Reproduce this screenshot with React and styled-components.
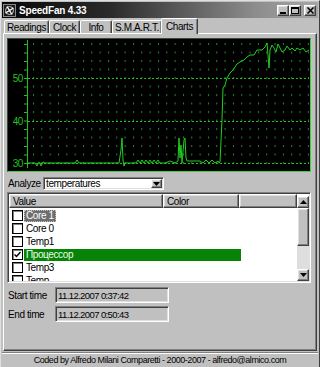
import React from "react";
import styled, { createGlobalStyle, css } from "styled-components";

const GlobalStyle = createGlobalStyle`
  html, body { margin: 0; padding: 0; background: #c0c0c0; }
  body { font-family: "Liberation Sans", Arial, sans-serif; }
  * { box-sizing: border-box; }
`;

const raised = css`
  border: 1px solid;
  border-color: #ffffff #404040 #404040 #ffffff;
  box-shadow: inset -1px -1px #808080, inset 1px 1px #dfdfdf;
`;

const sunken = css`
  border: 1px solid;
  border-color: #808080 #ffffff #ffffff #808080;
  box-shadow: inset 1px 1px #404040, inset -1px -1px #dfdfdf;
`;

const tabs = [
  { label: "Readings", width: 45 },
  { label: "Clock", width: 31 },
  { label: "Info", width: 32 },
  { label: "S.M.A.R.T.", width: 50 },
  { label: "Charts", width: 37, active: true },
];

const sensors = [
  { name: "Core 1", focus: true },
  { name: "Core 0" },
  { name: "Temp1" },
  { name: "Процессор", checked: true, color: true },
  { name: "Temp3" },
  { name: "Temp" },
];

// chart data in window coordinates
const series = [
  [27, 163], [35, 163], [37, 166], [39, 162], [41, 166], [43, 162], [45, 163],
  [75, 163], [77, 160], [79, 163], [119, 163], [121, 150], [122, 138], [123, 160],
  [124, 166], [125, 163], [136, 163], [138, 160], [140, 163], [142, 160], [144, 163],
  [146, 160], [148, 163], [150, 160], [152, 163], [154, 160], [156, 163], [158, 160],
  [160, 163], [165, 163], [170, 161], [175, 163], [178, 161], [179, 138], [180, 158],
  [181, 145], [182, 163], [184, 140], [185, 138], [186, 158], [187, 161], [200, 161],
  [203, 163], [206, 160], [209, 163], [212, 160], [215, 163], [218, 161], [219, 163],
  [220, 162], [222, 120], [223, 88], [225, 85], [227, 78], [230, 73], [233, 70],
  [237, 64], [240, 62], [244, 60], [247, 57], [250, 55], [254, 55], [257, 50],
  [262, 50], [265, 47], [267, 43], [268, 55], [269, 68], [270, 50], [272, 45],
  [274, 48], [276, 52], [278, 44], [280, 48], [282, 52], [285, 50], [287, 46],
  [290, 50], [292, 48], [295, 51], [297, 48], [300, 50], [303, 48], [306, 52], [309, 50],
];

const rows = Array.from({ length: 15 }, (_, k) => 125 - 8.5 * k);

const Chart = () => (
  <ChartFrame>
    <svg width="304" height="134" viewBox="0 0 304 134">
      <defs>
        <pattern id="dots" x="26" y="5" width="8.33" height="8.5" patternUnits="userSpaceOnUse">
          <rect x="0" y="0" width="1" height="2" fill="#2c8a2c" />
        </pattern>
      </defs>
      <rect x="21" y="2" width="281" height="128" fill="url(#dots)" />
      <line x1="20.5" y1="2" x2="20.5" y2="130" stroke="#22c022" />
      {rows.map((y) => (
        <line key={y} x1="17" y1={y + 0.5} x2="20" y2={y + 0.5} stroke="#22c022" />
      ))}
      {[40.5, 83.5, 125.5].map((y) => (
        <line key={y} x1="21" y1={y} x2="302" y2={y} stroke="#22c022" strokeDasharray="2 2" />
      ))}
      {[["50", 44], ["40", 87], ["30", 129]].map(([t, y]) => (
        <text key={t} x="16" y={y} fill="#22c022" fontSize="10" textAnchor="end"
          fontFamily="Liberation Sans, Arial, sans-serif">{t}</text>
      ))}
      <g transform="translate(-7 -38)">
        <polyline points={series.map((p) => p.join(",")).join(" ")}
          fill="none" stroke="#22d022" strokeWidth="1" />
      </g>
    </svg>
  </ChartFrame>
);

const FanIcon = () => (
  <svg width="13" height="13" viewBox="0 0 13 13">
    <rect x="0.5" y="0.5" width="12" height="12" fill="#1a1a1a" stroke="#8a8a8a" />
    <circle cx="6.5" cy="6.5" r="4" fill="none" stroke="#cfcfcf" />
    <path d="M6.5 6.5 L4 2.5 M6.5 6.5 L10.5 4 M6.5 6.5 L9 10.5 M6.5 6.5 L2.5 9" stroke="#ffffff" strokeWidth="1.4" />
  </svg>
);

const App = () => (
  <>
    <GlobalStyle />
    <Window>
      <TitleBar>
        <FanIcon />
        <Title>SpeedFan 4.33</Title>
        <Controls>
          <CtlButton>
            <svg width="7" height="7"><rect x="0" y="5" width="6" height="2" fill="#000" /></svg>
          </CtlButton>
          <CtlButton>
            <svg width="8" height="7"><rect x="0.5" y="0.5" width="7" height="6" fill="none" stroke="#000" /><rect x="0" y="0" width="8" height="2" fill="#000" /></svg>
          </CtlButton>
          <CtlButton $gap>
            <svg width="7" height="7"><path d="M0.5 0.5 L6.5 6.5 M6.5 0.5 L0.5 6.5" stroke="#000" strokeWidth="1.5" /></svg>
          </CtlButton>
        </Controls>
      </TitleBar>

      <TabBar>
        {tabs.map((t) => (
          <Tab key={t.label} $active={t.active} $width={t.width}>{t.label}</Tab>
        ))}
      </TabBar>

      <Panel>
        <Chart />

        <AnalyzeRow>
          <Label>Analyze</Label>
          <Combo>
            <ComboText>temperatures</ComboText>
            <ComboButton>
              <svg width="7" height="4"><path d="M0 0 H7 L3.5 4 Z" fill="#000" /></svg>
            </ComboButton>
          </Combo>
        </AnalyzeRow>

        <ListView>
          <ListBody>
            <Header>
              <HeaderCell $width={154}>Value</HeaderCell>
              <HeaderCell $width={76}>Color</HeaderCell>
              <HeaderCell $grow />
            </Header>
            {sensors.map((s) => (
              <Row key={s.name}>
                <CheckBox>
                  {s.checked && (
                    <svg width="7" height="7"><path d="M0.5 3.5 L2.5 5.5 L6.5 1" fill="none" stroke="#000" strokeWidth="1.5" /></svg>
                  )}
                </CheckBox>
                <ItemLabel $focus={s.focus} $color={s.color}>{s.name}</ItemLabel>
              </Row>
            ))}
          </ListBody>
          <ScrollBar>
            <ScrollButton>
              <svg width="7" height="4"><path d="M0 4 H7 L3.5 0 Z" fill="#000" /></svg>
            </ScrollButton>
            <Thumb />
            <Track />
            <ScrollButton>
              <svg width="7" height="4"><path d="M0 0 H7 L3.5 4 Z" fill="#000" /></svg>
            </ScrollButton>
          </ScrollBar>
        </ListView>

        <TimeGrid>
          <Label>Start time</Label>
          <TimeField>11.12.2007 0:37:42</TimeField>
          <Label>End time</Label>
          <TimeField>11.12.2007 0:50:43</TimeField>
        </TimeGrid>
      </Panel>

      <StatusBar>Coded by Alfredo Milani Comparetti - 2000-2007 - alfredo@almico.com</StatusBar>
    </Window>
  </>
);

const Window = styled.div`
  width: 320px;
  height: 367px;
  display: flex;
  flex-direction: column;
  background: #c0c0c0;
  border: 1px solid;
  border-color: #dfdfdf #404040 #404040 #dfdfdf;
  border-bottom: none;
  padding: 1px 1px 0 1px;
  overflow: hidden;
  font-size: 9.5px;
  letter-spacing: -0.4px;
  color: #000;
`;

const TitleBar = styled.div`
  height: 16px;
  flex: none;
  display: flex;
  align-items: center;
  padding: 0 2px 0 1px;
  background: linear-gradient(90deg, #050505 0%, #2c2c2c 35%, #8c8c8c 80%, #a6a6a6 100%);
`;

const Title = styled.span`
  margin-left: 3px;
  color: #ffffff;
  font-weight: bold;
  font-size: 10px;
  letter-spacing: -0.2px;
`;

const Controls = styled.div`
  margin-left: auto;
  display: flex;
  align-items: center;
`;

const CtlButton = styled.div`
  width: 12px;
  height: 11px;
  margin-left: ${(p) => (p.$gap ? "3px" : "0")};
  background: #c0c0c0;
  ${raised};
  display: flex;
  align-items: center;
  justify-content: center;
`;

const TabBar = styled.div`
  height: 15px;
  flex: none;
  display: flex;
  align-items: flex-end;
  padding-left: 2px;
  position: relative;
  z-index: 1;
`;

const Tab = styled.div`
  width: ${(p) => p.$width}px;
  height: ${(p) => (p.$active ? 16 : 13)}px;
  margin-bottom: ${(p) => (p.$active ? -1 : 0)}px;
  margin-left: ${(p) => (p.$active ? -1 : 0)}px;
  background: #c0c0c0;
  border: 1px solid;
  border-bottom: none;
  border-color: #ffffff #404040 transparent #ffffff;
  border-radius: 2px 2px 0 0;
  box-shadow: inset -1px 0 #808080;
  display: flex;
  align-items: ${(p) => (p.$active ? "flex-start" : "center")};
  padding-top: ${(p) => (p.$active ? 2 : 0)}px;
  justify-content: center;
  font-size: 10px;
  white-space: nowrap;
`;

const Panel = styled.div`
  flex: none;
  height: 318px;
  margin: 0 1px 0 1px;
  background: #c0c0c0;
  border: 1px solid;
  border-color: #ffffff #404040 #404040 #ffffff;
  box-shadow: inset -1px -1px #808080;
  padding: 4px 3px 0 3px;
  display: flex;
  flex-direction: column;
`;

const ChartFrame = styled.div`
  width: 304px;
  height: 134px;
  flex: none;
  background: #000;
  border: 1px solid;
  border-color: #3a4a3a #36d636 #36d636 #3a4a3a;
  overflow: hidden;

  svg {
    display: block;
    margin: -1px 0 0 -1px;
  }
`;

const AnalyzeRow = styled.div`
  margin-top: 5px;
  height: 13px;
  display: flex;
  align-items: center;
  font-size: 10px;
`;

const Label = styled.span`
  padding-left: 1px;
  width: 36px;
  flex: none;
  white-space: nowrap;
`;

const Combo = styled.div`
  width: 121px;
  height: 13px;
  background: #fff;
  ${sunken};
  display: flex;
  align-items: center;
  padding: 0 1px 0 2px;
`;

const ComboText = styled.span`
  flex: 1;
`;

const ComboButton = styled.div`
  width: 11px;
  height: 9px;
  background: #c0c0c0;
  ${raised};
  display: flex;
  align-items: center;
  justify-content: center;
`;

const ListView = styled.div`
  margin-top: 2px;
  width: 304px;
  height: 91px;
  flex: none;
  background: #fff;
  ${sunken};
  padding: 1px;
  display: flex;
  overflow: hidden;
`;

const ListBody = styled.div`
  flex: 1;
  overflow: hidden;
`;

const Header = styled.div`
  display: flex;
  height: 14px;
  margin-bottom: 1px;
`;

const HeaderCell = styled.div`
  ${(p) => (p.$grow ? "flex: 1;" : `width: ${p.$width}px; flex: none;`)}
  height: 14px;
  background: #c0c0c0;
  ${raised};
  padding: 0 3px;
  display: flex;
  align-items: center;
  font-size: 10px;
`;

const Row = styled.div`
  height: 13px;
  display: flex;
  align-items: center;
  padding-left: 3px;
`;

const CheckBox = styled.div`
  width: 11px;
  height: 11px;
  flex: none;
  background: #fff;
  border: 1px solid #000;
  box-shadow: inset 1px 1px #808080;
  display: flex;
  align-items: center;
  justify-content: center;
`;

const ItemLabel = styled.span`
  margin-left: 1px;
  height: 12px;
  line-height: 12px;
  padding: 0 2px;
  font-size: 10px;
  ${(p) => p.$focus && css`
    background: #6e6e6e;
    color: #fff;
    outline: 1px dotted #c0c0c0;
    outline-offset: -1px;
  `}
  ${(p) => p.$color && css`
    width: 217px;
    background: #078307;
    color: #e8ffe8;
  `}
`;

const ScrollBar = styled.div`
  width: 12px;
  flex: none;
  display: flex;
  flex-direction: column;
  padding-top: 2px;
`;

const ScrollButton = styled.div`
  height: 12px;
  flex: none;
  background: #c0c0c0;
  ${raised};
  display: flex;
  align-items: center;
  justify-content: center;
`;

const Thumb = styled.div`
  height: 38px;
  flex: none;
  background: #c0c0c0;
  ${raised};
`;

const Track = styled.div`
  flex: 1;
  background: #dedede;
`;

const TimeGrid = styled.div`
  margin-top: 4px;
  display: grid;
  grid-template-columns: 48px 114px;
  row-gap: 3px;
  align-items: center;
  font-size: 10px;
`;

const TimeField = styled.div`
  height: 16px;
  ${sunken};
  background: #c0c0c0;
  padding: 0 2px;
  display: flex;
  align-items: center;
  font-size: 9.5px;
  letter-spacing: -0.6px;
`;

const StatusBar = styled.div`
  flex: 1;
  margin-top: 1px;
  border-top: 1px solid #808080;
  box-shadow: inset 0 1px #ffffff;
  display: flex;
  align-items: center;
  justify-content: center;
  white-space: nowrap;
  font-size: 9px;
  letter-spacing: -0.45px;
`;

export default App;
